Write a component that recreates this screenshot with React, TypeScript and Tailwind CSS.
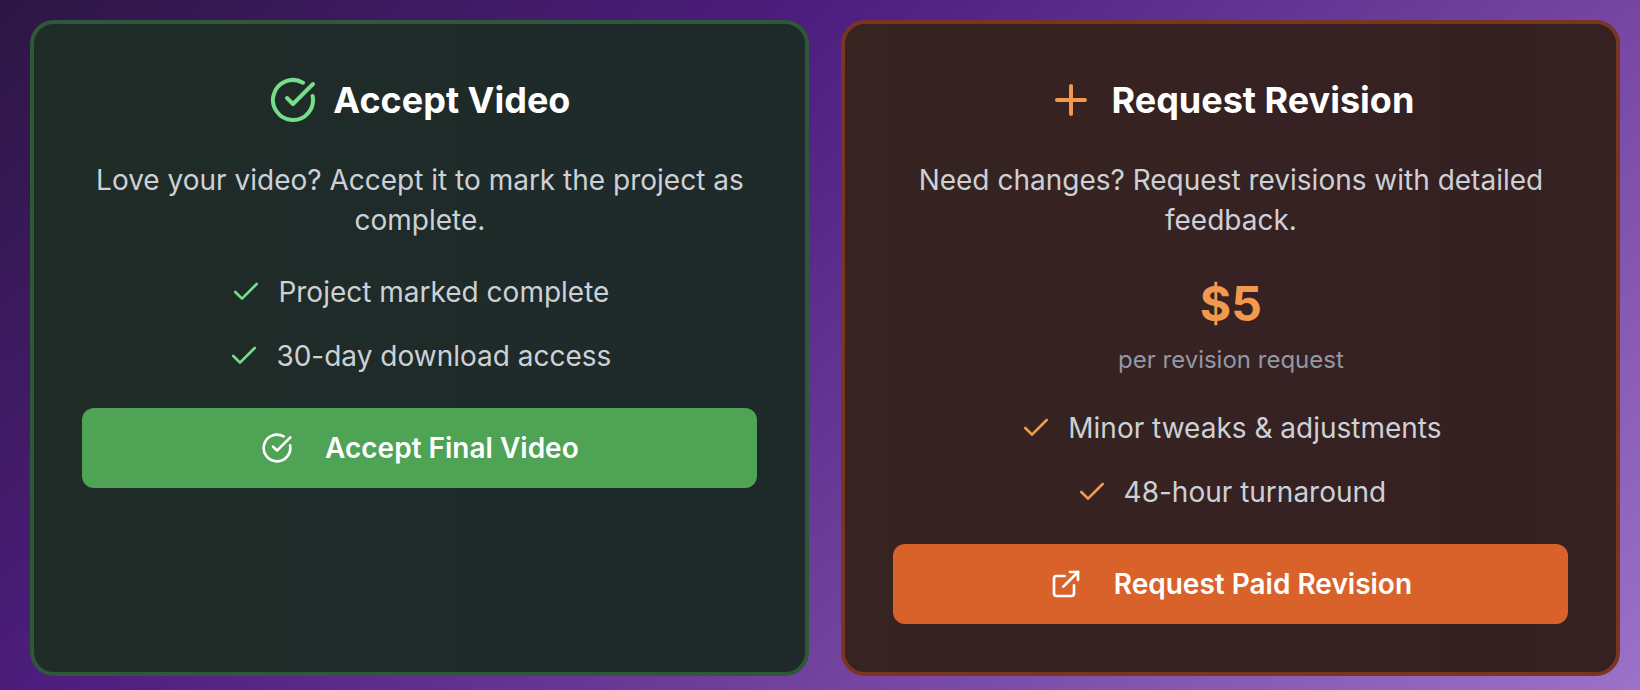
import React from "react";

function CheckCircle({ className }: { className: string }) {
  return (
    <svg viewBox="0 0 24 24" fill="none" stroke="currentColor" strokeWidth="2" strokeLinecap="round" strokeLinejoin="round" className={className}>
      <path d="M21.801 10A10 10 0 1 1 17 3.335" />
      <path d="m9 11 3 3L22 4" />
    </svg>
  );
}

function Plus({ className }: { className: string }) {
  return (
    <svg viewBox="0 0 24 24" fill="none" stroke="currentColor" strokeWidth="2" strokeLinecap="round" className={className}>
      <path d="M5 12h14M12 5v14" />
    </svg>
  );
}

function ExternalLink({ className }: { className: string }) {
  return (
    <svg viewBox="0 0 24 24" fill="none" stroke="currentColor" strokeWidth="2" strokeLinecap="round" strokeLinejoin="round" className={className}>
      <path d="M15 3h6v6" strokeLinejoin="miter" />
      <path d="M10 14 21 3" />
      <path d="M18 13v6a2 2 0 0 1-2 2H5a2 2 0 0 1-2-2V8a2 2 0 0 1 2-2h6" />
    </svg>
  );
}

function Feature({ color, children }: { color: string; children: React.ReactNode }) {
  return (
    <li className="flex items-center justify-center gap-4">
      <svg viewBox="0 0 24 24" fill="none" stroke="currentColor" strokeWidth="2" strokeLinecap="round" strokeLinejoin="round" className={`size-8 ${color}`}>
        <path d="M20 6 9 17l-5-5" />
      </svg>
      <span>{children}</span>
    </li>
  );
}

export default function App() {
  return (
    <div className="grid h-[690px] w-[1640px] grid-cols-2 gap-8 overflow-hidden bg-[linear-gradient(138deg,#2d1643_0%,#4e1e80_35%,#7646a2_68%,#9b72c8_100%)] pt-5 pr-[19.6px] pb-3.5 pl-[30.4px] text-center font-['Inter',sans-serif] text-[28px] leading-10 text-[#cdd1d7]">
      <section className="rounded-3xl border-4 border-[#2e5837] bg-linear-to-r from-[#202c27] to-[#1e2a2a] p-12">
        <h2 className="mb-8 flex items-center justify-center gap-4 text-4xl leading-[56px] font-bold text-white">
          <CheckCircle className="size-12 text-[#77dd88]" />
          Accept Video
        </h2>
        <p className="mb-8">Love your video? Accept it to mark the project as complete.</p>
        <ul className="mb-8 flex flex-col gap-6">
          <Feature color="text-[#77dd88]">Project marked complete</Feature>
          <Feature color="text-[#77dd88]">30-day download access</Feature>
        </ul>
        <button className="flex h-20 w-full items-center justify-center gap-8 rounded-xl bg-[#4ea355] font-semibold text-white">
          <CheckCircle className="size-8" />
          Accept Final Video
        </button>
      </section>
      <section className="rounded-3xl border-4 border-[#783521] bg-linear-to-r from-[#362421] to-[#352022] p-12">
        <h2 className="mb-8 flex items-center justify-center gap-4 text-4xl leading-[56px] font-bold text-white">
          <Plus className="size-12 text-[#f0994f]" />
          Request Revision
        </h2>
        <p className="mb-8">Need changes? Request revisions with detailed feedback.</p>
        <div className="mb-8">
          <div className="mb-2 text-5xl leading-[64px] font-bold text-[#f0994f]">$5</div>
          <div className="text-2xl leading-8 text-[#9398a6]">per revision request</div>
        </div>
        <ul className="mb-8 flex flex-col gap-6">
          <Feature color="text-[#f0994f]">Minor tweaks &amp; adjustments</Feature>
          <Feature color="text-[#f0994f]">48-hour turnaround</Feature>
        </ul>
        <button className="flex h-20 w-full items-center justify-center gap-8 rounded-xl bg-[#d9622b] font-semibold text-white">
          <ExternalLink className="size-8" />
          Request Paid Revision
        </button>
      </section>
    </div>
  );
}
